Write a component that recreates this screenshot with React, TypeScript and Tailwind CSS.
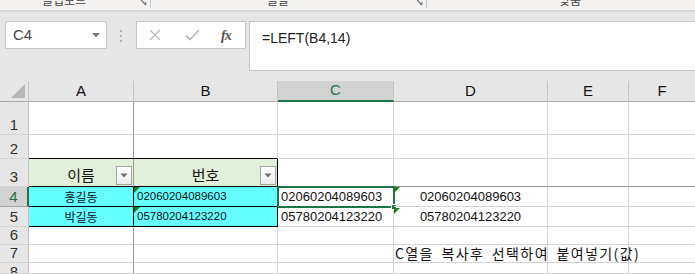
import React from "react";

const grid = "border-r border-b border-[#d4d4d4]";
const hdr = "bg-[#e6e6e6] border-r border-b border-r-[#c4c4c4] border-b-[#a9a9a9]";

function FilterButton() {
  return (
    <div className="absolute right-[1px] bottom-[1px] w-[16px] h-[19px] border border-[#a6a6a6] bg-gradient-to-b from-white to-[#ededed] flex items-center justify-center">
      <svg width="8" height="5" viewBox="0 0 8 5">
        <path d="M0.5 0.5 L7.5 0.5 L4 4.5 Z" fill="#6b6b6b" />
      </svg>
    </div>
  );
}

function ErrorMark() {
  return (
    <svg className="absolute left-0 top-0" width="6" height="6" viewBox="0 0 6 6">
      <path d="M0 0 L6 0 L0 6 Z" fill="#1e7a1e" />
    </svg>
  );
}

function RowHead({ n, active, top }: { n: number; active?: boolean; top?: boolean }) {
  const align = top ? "items-start" : "items-end";
  return (
    <div
      className={
        active
          ? `bg-[#d2d2d2] border-b border-b-[#a9a9a9] border-r-2 border-r-[#217346] flex ${align} justify-center text-[#217346] text-[15px] leading-[18px] overflow-hidden`
          : `bg-[#e6e6e6] border-r border-b border-r-[#c4c4c4] border-b-[#d4d4d4] flex ${align} justify-center text-[#333] text-[15px] leading-[18px] overflow-hidden`
      }
    >
      {n}
    </div>
  );
}

export default function App() {
  return (
    <div className="w-[695px] h-[274px] overflow-hidden bg-[#e6e6e6] font-['Liberation_Sans','Noto_Sans_CJK_KR',sans-serif] select-none">
      {/* ribbon group labels (cut off) */}
      <div className="h-[10px] bg-[#f3f2f1] flex items-start overflow-hidden text-[12px] leading-[14px] text-[#444] font-['Noto_Sans_CJK_KR',sans-serif]">
        <span className="ml-[42px] -mt-[7px] w-[50px]">클립보드</span>
        <span className="ml-[46px] -mt-[3px] text-[10px] leading-[10px] text-[#555]">↘</span>
        <div className="ml-[2px] w-px h-[8px] bg-[#c8c8c8]" />
        <span className="ml-[116px] -mt-[7px] w-[30px]">글꼴</span>
        <span className="ml-[117px] -mt-[3px] text-[10px] leading-[10px] text-[#555]">↘</span>
        <div className="ml-[2px] w-px h-[8px] bg-[#c8c8c8]" />
        <span className="ml-[132px] -mt-[7px]">맞춤</span>
      </div>
      <div className="h-[3px] bg-gradient-to-b from-[#d2d2d2] to-[#e6e6e6]" />

      {/* formula bar */}
      <div className="flex items-start pt-[8px] h-[68px]">
        <div className="ml-[5px] w-[102px] h-[28px] bg-white border border-[#c6c6c6] flex items-center justify-between pl-[7px] pr-[6px]">
          <span className="text-[15px] text-[#444]">C4</span>
          <svg width="8" height="5" viewBox="0 0 8 5">
            <path d="M0 0 L8 0 L4 4.5 Z" fill="#7a7a7a" />
          </svg>
        </div>
        <div className="ml-[13px] mt-[9px] flex flex-col gap-[3px]">
          <div className="w-[2px] h-[2px] bg-[#b5b5b5]" />
          <div className="w-[2px] h-[2px] bg-[#b5b5b5]" />
          <div className="w-[2px] h-[2px] bg-[#b5b5b5]" />
        </div>
        <div className="ml-[14px] w-[110px] h-[28px] bg-white border border-[#c6c6c6] flex items-center">
          <svg className="ml-[12px]" width="12" height="12" viewBox="0 0 12 12">
            <path d="M1 1 L11 11 M11 1 L1 11" stroke="#b8b8b8" strokeWidth="1.3" />
          </svg>
          <svg className="ml-[24px]" width="15" height="12" viewBox="0 0 15 12">
            <path d="M1 6.5 L5 10.5 L14 1" stroke="#bcbcbc" strokeWidth="1.8" fill="none" />
          </svg>
          <span className="ml-[21px] font-['Liberation_Serif',serif] italic font-bold text-[14px] text-[#555] tracking-[-1px]">fx</span>
        </div>
        <div className="ml-[3px] flex-1 h-[50px] bg-white border border-r-0 border-[#c6c6c6] pl-[12px] pt-[4px]">
          <span className="text-[14px] text-[#222]">=LEFT(B4,14)</span>
        </div>
      </div>

      {/* sheet */}
      <div className="grid grid-cols-[29px_105px_144px_116px_154px_81px_1fr] grid-rows-[21px_33px_24px_28px_20px_20px_18px_18px_1fr] h-[193px] bg-white text-[#111]">
        {/* column headers */}
        <div className={`${hdr} relative`}>
          <svg className="absolute right-[3px] bottom-[3px]" width="14" height="14" viewBox="0 0 14 14">
            <path d="M14 0 L14 14 L0 14 Z" fill="#b7b7b7" />
          </svg>
        </div>
        <div className={`${hdr} border-r-[#9a9a9a] flex items-center justify-center text-[15px]`}>A</div>
        <div className={`${hdr} flex items-center justify-center text-[15px]`}>B</div>
        <div className="bg-[#d2d2d2] border-r border-r-[#c4c4c4] border-b-2 border-b-[#217346] flex items-center justify-center text-[15px] text-[#217346]">C</div>
        <div className={`${hdr} flex items-center justify-center text-[15px]`}>D</div>
        <div className={`${hdr} flex items-center justify-center text-[15px]`}>E</div>
        <div className={`${hdr} border-r-0 flex items-center justify-center text-[15px]`}>F</div>

        {/* row 1 */}
        <RowHead n={1} />
        <div className={`${grid} border-r-[#9a9a9a]`} />
        <div className={grid} />
        <div className={grid} />
        <div className={grid} />
        <div className={grid} />
        <div className="border-b border-[#d4d4d4]" />

        {/* row 2 */}
        <RowHead n={2} />
        <div className={`${grid} border-r-[#9a9a9a] border-b-black`} />
        <div className={`${grid} border-b-black`} />
        <div className={grid} />
        <div className={grid} />
        <div className={grid} />
        <div className="border-b border-[#d4d4d4]" />

        {/* row 3 */}
        <RowHead n={3} />
        <div className="relative bg-[#e2efda] border-r border-b border-r-[#9a9a9a] border-b-black flex items-end justify-center pb-[1px] text-[15px] leading-[20px] font-['Noto_Sans_CJK_KR',sans-serif]">
          이름
          <FilterButton />
        </div>
        <div className="relative bg-[#e2efda] border-r border-b border-black flex items-end justify-center pb-[1px] text-[15px] leading-[20px] font-['Noto_Sans_CJK_KR',sans-serif]">
          번호
          <FilterButton />
        </div>
        <div className="border-r border-b border-r-[#d4d4d4] border-b-[#217346]" />
        <div className="border-r border-b border-r-[#d4d4d4] border-b-[#9a9a9a]" />
        <div className="border-r border-b border-r-[#d4d4d4] border-b-[#9a9a9a]" />
        <div className="border-b border-[#9a9a9a]" />

        {/* row 4 */}
        <RowHead n={4} active />
        <div className="bg-[#66ffff] border-r border-b border-black flex items-center justify-center text-[12px] font-['Noto_Sans_CJK_KR',sans-serif]">홍길동</div>
        <div className="relative bg-[#66ffff] border-r border-b border-black flex items-center pl-[3px] text-[11.5px]">
          <ErrorMark />
          02060204089603
        </div>
        <div className="relative border-r border-b border-[#d4d4d4] flex items-center pl-[3px] text-[13px]">
          02060204089603
          <div className="absolute -left-px -top-px w-[118px] h-[22px] border-2 border-[#217346]" />
          <div className="absolute -right-[4px] -bottom-[4px] w-[6px] h-[6px] bg-[#217346] border border-white" />
        </div>
        <div className={`${grid} relative flex items-center justify-center text-[13px]`}>
          <ErrorMark />
          02060204089603
        </div>
        <div className={grid} />
        <div className="border-b border-[#d4d4d4]" />

        {/* row 5 */}
        <RowHead n={5} />
        <div className="bg-[#66ffff] border-r border-b border-black flex items-center justify-center text-[12px] font-['Noto_Sans_CJK_KR',sans-serif]">박길동</div>
        <div className="relative bg-[#66ffff] border-r border-b border-black flex items-center pl-[3px] text-[11.5px]">
          <ErrorMark />
          05780204123220
        </div>
        <div className={`${grid} flex items-center pl-[3px] text-[13px]`}>05780204123220</div>
        <div className={`${grid} relative flex items-center justify-center text-[13px]`}>
          <svg className="absolute left-0 top-[1px]" width="6" height="6" viewBox="0 0 6 6">
            <path d="M0 0 L6 0 L0 6 Z" fill="#1e7a1e" />
          </svg>
          05780204123220
        </div>
        <div className={grid} />
        <div className="border-b border-[#d4d4d4]" />

        {/* row 6 */}
        <RowHead n={6} />
        <div className={`${grid} border-r-[#9a9a9a]`} />
        <div className={grid} />
        <div className={grid} />
        <div className={grid} />
        <div className={grid} />
        <div className="border-b border-[#d4d4d4]" />

        {/* row 7 */}
        <RowHead n={7} />
        <div className={`${grid} border-r-[#9a9a9a]`} />
        <div className={grid} />
        <div className={grid} />
        <div className={`${grid} relative overflow-visible`}>
          <span className="absolute left-[1px] bottom-[0px] whitespace-nowrap text-[14px] leading-[17px] tracking-[1.4px] [word-spacing:3px] font-['Noto_Sans_CJK_KR',sans-serif] text-[#111]">
            C열을 복사후 선택하여 붙여넣기(값)
          </span>
        </div>
        <div className={grid} />
        <div className="border-b border-[#d4d4d4]" />

        {/* row 8 */}
        <RowHead n={8} top />
        <div className={`${grid} border-r-[#9a9a9a]`} />
        <div className={grid} />
        <div className={grid} />
        <div className={grid} />
        <div className={grid} />
        <div className="border-b border-[#d4d4d4]" />
      </div>
    </div>
  );
}
